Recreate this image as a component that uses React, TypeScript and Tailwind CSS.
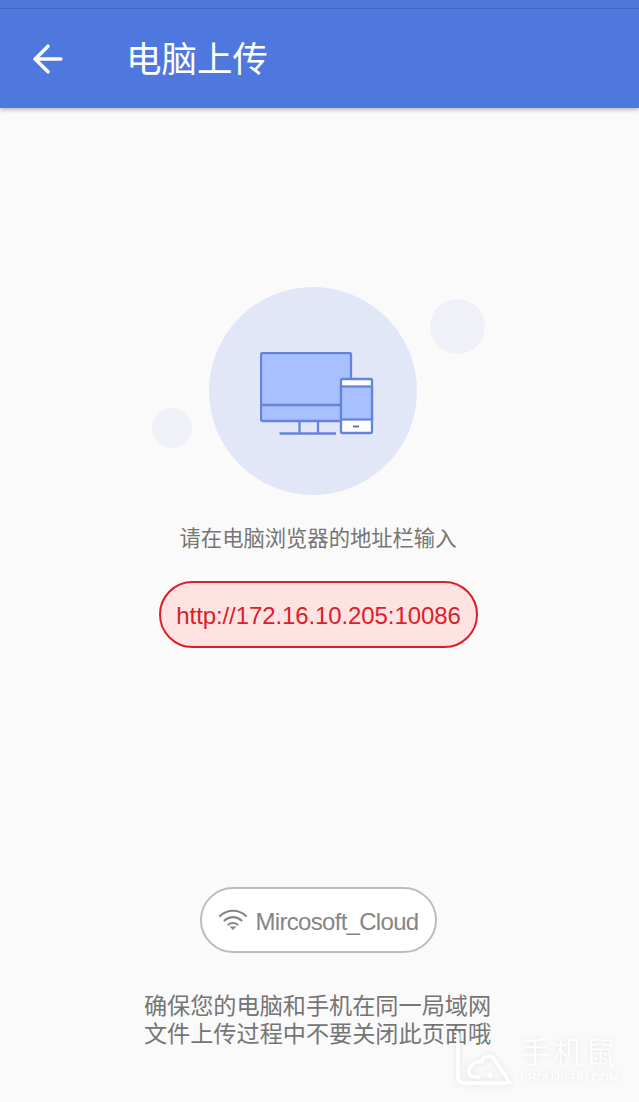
import { ArrowLeft } from "lucide-react";

const cjk = "font-['Noto_Sans_CJK_SC','Noto_Sans',sans-serif]";
const latin = "font-['Liberation_Sans','Noto_Sans_CJK_SC',sans-serif]";

function DevicesIcon() {
  return (
    <svg width="116" height="84" viewBox="0 0 116 84" fill="none" stroke="#6484dc" strokeWidth="2.3">
      {/* monitor */}
      <rect x="1" y="1" width="90" height="68" rx="1.5" fill="#a8c0ff" />
      <path d="M1 53h90M39.500 69v12.500M58 69v12.500M19.500 81.500h56.500" />
      {/* phone */}
      <rect x="81" y="27" width="31" height="54" rx="1.500" fill="#ffffff" />
      <rect x="81" y="34.500" width="31" height="33" fill="#a8c0ff" />
      <path d="M93 74.500h6" strokeWidth="1.800" stroke="#4f6dc0" />
    </svg>
  );
}

function Illustration() {
  return (
    <div className="relative w-[208px] h-[208px] ml-[-13px] rounded-full bg-[#e2e7f7] flex items-center justify-center">
      <div className="absolute left-[221px] top-[12px] w-[55px] h-[55px] rounded-full bg-[#f0f1f8]" />
      <div className="absolute left-[-57px] top-[121px] w-[40px] h-[40px] rounded-full bg-[#f0f1f8]" />
      <div className="ml-[10px] mt-[5px] flex">
        <DevicesIcon />
      </div>
    </div>
  );
}

function WifiIcon() {
  return (
    <svg width="30" height="24" viewBox="0 0 30 24" fill="none" stroke="#858585" strokeLinecap="round">
      <path d="M2 8C9.500 1 20.500 1 28 8" strokeWidth="2.200" />
      <path d="M6.500 12.500C11.500 8 18.500 8 23.500 12.500" strokeWidth="2.200" />
      <path d="M10.500 16.500C13 14.500 17 14.500 19.500 16.500" strokeWidth="2.200" />
      <path d="M11.500 18.500h7l-3.500 3.500z" fill="#858585" stroke="none" />
    </svg>
  );
}

function Watermark() {
  return (
    <div className="absolute left-[456px] top-[1032px] flex items-start gap-[8px] [filter:drop-shadow(0_0_3px_rgba(0,0,0,0.1))]">
      <svg width="56" height="53" viewBox="0 0 56 53" fill="none" stroke="#ffffff" strokeWidth="3.500" strokeLinecap="round" strokeLinejoin="round">
        <path d="M2 2v43c0 4 2 6 6 6h46L41 31" />
        <path d="M41 31c-2-5-7-8-11-6-3 1-4 3-4 5-5-1-12 2-13 8-1 5 4 8 10 7" />
        <circle cx="34" cy="43" r="1" fill="#ffffff" />
      </svg>
      <div className="flex flex-col items-start mt-[-3px]">
        <span className={`${cjk} text-[30px] leading-[42px] tracking-[3px] font-light text-white`}>手机鼠</span>
        <span className={`${latin} text-[11.500px] leading-[13px] tracking-[0.200px] text-white`}>SHOUJISHU.COM</span>
      </div>
    </div>
  );
}

export default function App() {
  return (
    <div className="relative w-[639px] h-[1102px] overflow-hidden bg-[#fafafa] flex flex-col">
      <div className="h-[9px] bg-[#4f76dc] border-b border-[#4668c6]" />
      <header className="h-[99px] shrink-0 bg-[#4f78de] flex items-center pl-[26px] shadow-[0_2px_4px_rgba(0,0,0,0.25)]">
        <ArrowLeft size={44} color="#ffffff" strokeWidth={1.900} />
        <h1 className={`${cjk} ml-[56px] mb-[4px] text-[35.500px] leading-none font-normal text-white`}>电脑上传</h1>
      </header>

      <main className="flex-1 flex flex-col items-center">
        <div className="mt-[179px]">
          <Illustration />
        </div>
        <p className={`${cjk} mt-[27px] mr-[3px] text-[21.300px] leading-[29px] text-[#757575]`}>请在电脑浏览器的地址栏输入</p>
        <div className={`${latin} mt-[30px] mr-[2px] pt-[2px] w-[319px] h-[67px] rounded-full border-2 border-[#dc1f26] bg-[#ffe3e3] flex items-center justify-center text-[24px] tracking-[-0.100px] text-[#dc2028]`}>
          http://172.16.10.205:10086
        </div>
        <div className={`${latin} mt-[239px] mr-[3px] w-[237px] h-[66px] rounded-full border-2 border-[#bcbcbc] bg-white flex items-center justify-center gap-[8px] text-[24px] tracking-[-0.700px] text-[#858585]`}>
          <WifiIcon />
          <span className="pt-[3px]">Mircosoft_Cloud</span>
        </div>
        <p className={`${cjk} mt-[37px] mr-[4px] text-center text-[23.150px] leading-[28px] text-[#757575]`}>
          确保您的电脑和手机在同一局域网
          <br />
          文件上传过程中不要关闭此页面哦
        </p>
      </main>

      <Watermark />
    </div>
  );
}
